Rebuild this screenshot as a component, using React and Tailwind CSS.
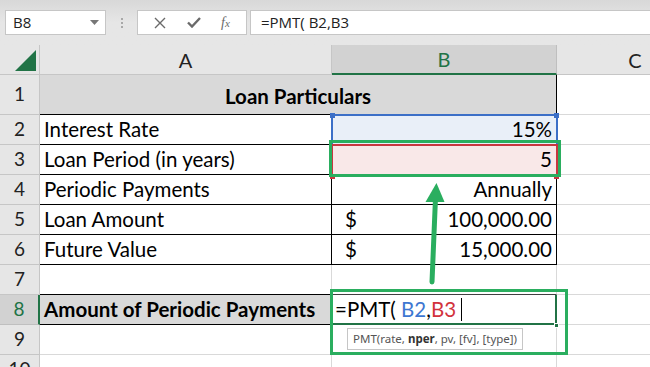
import React from 'react';

const font = { fontFamily: 'Lato, "Open Sans", sans-serif' };

function RowHead({ n, active }) {
  return (
    <div
      className={
        'flex items-center justify-center border-b border-r text-[19px] ' +
        (active
          ? 'bg-[#d2d2d2] text-[#217346] border-b-[#bfbfbf] border-r-2 border-r-[#217346]'
          : 'bg-[#e6e6e6] text-[#222] border-[#c6c6c6]')
      }
    >
      {n}
    </div>
  );
}

function Cell({ className = '', children }) {
  return <div className={'flex items-center px-1 text-[20.5px] text-black whitespace-nowrap ' + className}>{children}</div>;
}

export default function App() {
  const gray = 'border-r border-b border-[#d9d9d9]';
  const black = 'border-r border-b border-black';

  return (
    <div className="relative w-[650px] h-[367px] overflow-hidden bg-white select-none" style={font}>
      {/* Formula bar */}
      <div className="h-[45px] bg-gradient-to-b from-[#d8d8d8] via-[#e6e6e6] to-[#e6e6e6] flex items-start pt-[10px]">
        <div className="ml-[5px] w-[101px] h-[25px] bg-white border border-[#c6c6c6] flex items-center justify-between pl-[7px] pr-[6px] text-[15px] text-[#222]" style={{ fontFamily: '"Open Sans", sans-serif' }}>
          <span>B8</span>
          <svg width="9" height="5" viewBox="0 0 9 5"><path d="M0 0h9L4.5 5z" fill="#777" /></svg>
        </div>
        <div className="w-[31px] h-[25px] flex flex-col items-center justify-center gap-[2px]">
          <span className="w-[2px] h-[2px] bg-[#a8a8a8]" />
          <span className="w-[2px] h-[2px] bg-[#a8a8a8]" />
          <span className="w-[2px] h-[2px] bg-[#a8a8a8]" />
        </div>
        <div className="w-[110px] h-[25px] bg-white border border-[#c6c6c6] flex items-center justify-around px-[6px]">
          <svg width="12" height="12" viewBox="0 0 12 12"><path d="M1 1l10 10M11 1L1 11" stroke="#6a6a6a" strokeWidth="1.4" /></svg>
          <svg width="14" height="11" viewBox="0 0 14 11"><path d="M1 5.5l4 4L13 1" stroke="#6a6a6a" strokeWidth="2.4" fill="none" /></svg>
          <span className="text-[14px] italic text-[#6a6a6a]" style={{ fontFamily: '"Liberation Serif", serif' }}>
            f<span className="text-[11px]">x</span>
          </span>
        </div>
        <div className="ml-[3px] flex-1 h-[25px] bg-white border-y border-l border-[#c6c6c6] flex items-center pl-[10px] text-[15px] text-[#222]" style={{ fontFamily: '"Open Sans", sans-serif' }}>
          =PMT( B2,B3
        </div>
      </div>

      {/* Sheet */}
      <div className="grid grid-cols-[40px_292px_225px_156px] grid-rows-[30px_40px_repeat(9,30px)]">
        {/* column headers */}
        <div className="bg-[#e6e6e6] border-b border-r border-[#c6c6c6] relative">
          <svg className="absolute left-0 top-0" width="40" height="30" viewBox="0 0 40 30"><path d="M36 5v21H15z" fill="#217346" /></svg>
        </div>
        <div className="bg-[#e6e6e6] border-b border-r border-[#c6c6c6] flex items-center justify-center text-[20px] text-[#222]">A</div>
        <div className="bg-[#d2d2d2] border-b-2 border-b-[#217346] border-r border-r-[#bfbfbf] flex items-center justify-center text-[20px] text-[#217346]">B</div>
        <div className="bg-[#e6e6e6] border-b border-[#c6c6c6] flex items-center justify-center text-[20px] text-[#222]">C</div>

        {/* row 1 */}
        <RowHead n={1} />
        <Cell className={'col-span-2 justify-center font-bold bg-[#d9d9d9] pt-[4px] ' + black}>Loan Particulars</Cell>
        <Cell className={gray} />

        {/* row 2 */}
        <RowHead n={2} />
        <Cell className={black}>Interest Rate</Cell>
        <Cell className={'justify-end bg-[#e9eff8] ' + black}>15%</Cell>
        <Cell className={gray} />

        {/* row 3 */}
        <RowHead n={3} />
        <Cell className={black}>Loan Period (in years)</Cell>
        <Cell className={'justify-end bg-[#f9e8e8] ' + black}>5</Cell>
        <Cell className={gray} />

        {/* row 4 */}
        <RowHead n={4} />
        <Cell className={black}>Periodic Payments</Cell>
        <Cell className={'justify-end ' + black}>Annually</Cell>
        <Cell className={gray} />

        {/* row 5 */}
        <RowHead n={5} />
        <Cell className={black}>Loan Amount</Cell>
        <Cell className={'justify-between pl-[13px] ' + black}><span>$</span><span>100,000.00</span></Cell>
        <Cell className={gray} />

        {/* row 6 */}
        <RowHead n={6} />
        <Cell className={black}>Future Value</Cell>
        <Cell className={'justify-between pl-[13px] ' + black}><span>$</span><span>15,000.00</span></Cell>
        <Cell className={gray} />

        {/* row 7 */}
        <RowHead n={7} />
        <Cell className={'border-r border-r-[#d9d9d9] border-b border-b-black'} />
        <Cell className={'border-r border-r-[#d9d9d9] border-b border-b-[#404040]'} />
        <Cell className={gray} />

        {/* row 8 */}
        <RowHead n={8} active />
        <Cell className={'font-bold bg-[#d9d9d9] ' + black}>Amount of Periodic Payments</Cell>
        <Cell className="border-r-2 border-b-2 border-[#217346] pl-[3px]">
          <span>=PMT(&nbsp;</span>
          <span className="text-[#3e77d1]">B2</span>
          <span>,</span>
          <span className="text-[#d2323c]">B3</span>
          <span className="ml-[5px] w-px h-[23px] bg-black" />
        </Cell>
        <Cell className={gray} />

        {/* row 9 */}
        <RowHead n={9} />
        <Cell className={gray} />
        <Cell className={gray} />
        <Cell className={gray} />

        {/* row 10 */}
        <RowHead n={10} />
        <Cell className={gray} />
        <Cell className={gray} />
        <Cell className={gray} />
      </div>

      {/* reference highlight B2 */}
      <div className="absolute left-[331px] top-[114px] w-[227px] h-[32px] border-2 border-b-0 border-[#3c6fc7]" />
      <div className="absolute left-[330px] top-[113px] w-[5px] h-[5px] bg-[#3c6fc7]" />
      <div className="absolute left-[554px] top-[113px] w-[5px] h-[5px] bg-[#3c6fc7]" />

      {/* reference highlight B3 */}
      <div className="absolute left-[331px] top-[144px] w-[227px] h-[33px] border-2 border-[#c8373f]" />
      <div className="absolute left-[330px] top-[174px] w-[5px] h-[5px] bg-[#c8373f]" />
      <div className="absolute left-[554px] top-[174px] w-[5px] h-[5px] bg-[#c8373f]" />

      {/* fill handle */}
      <div className="absolute left-[554px] top-[323px] w-[5px] h-[5px] bg-[#217346] border border-white" />

      {/* function tooltip */}
      <div className="absolute left-[347px] top-[328px] h-[22px] px-[5px] bg-white border border-[#c6c6c6] flex items-center text-[11.5px] text-[#555]" style={{ fontFamily: '"Noto Sans", sans-serif' }}>
        PMT(rate,&nbsp;<b className="text-[#333]">nper</b>, pv, [fv], [type])
      </div>

      {/* annotations */}
      <div className="absolute left-[329px] top-[140px] w-[232px] h-[37px] border-[3px] border-[#2aae5f]" />
      <div className="absolute left-[330px] top-[289px] w-[238px] h-[66px] border-[3px] border-[#2aae5f]" />
      <svg className="absolute left-0 top-0 pointer-events-none" width="650" height="367">
        <path d="M432 282L435.5 198" stroke="#2aae5f" strokeWidth="5" strokeLinecap="round" />
        <path d="M425.5 202L436.5 183L444.5 202Z" fill="#2aae5f" />
      </svg>
    </div>
  );
}
